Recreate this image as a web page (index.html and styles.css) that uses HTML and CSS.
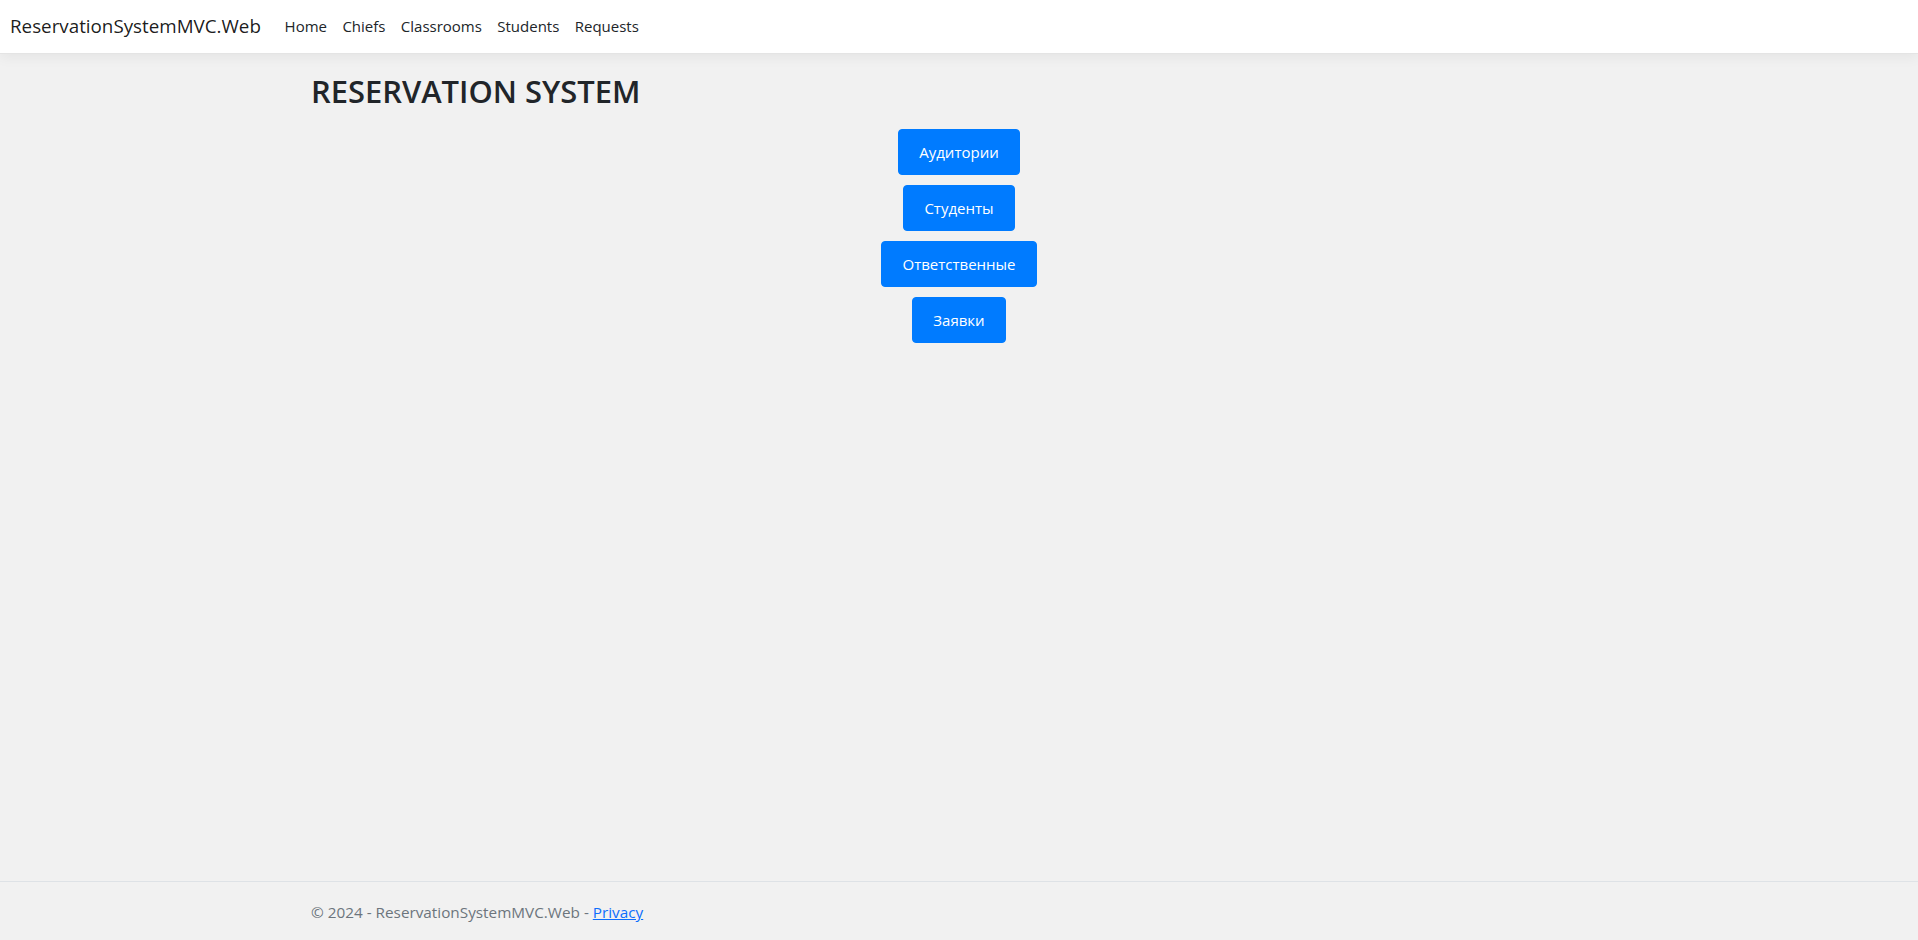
FILE: index.html
```html
<!DOCTYPE html>
<html lang="ru">
<head>
<meta charset="utf-8">
<title>ReservationSystemMVC.Web</title>
<link rel="stylesheet" href="styles.css">
</head>
<body>
<header class="navbar">
  <a class="brand" href="#">ReservationSystemMVC.Web</a>
  <nav class="nav">
    <a class="nav-link" href="#">Home</a>
    <a class="nav-link" href="#">Chiefs</a>
    <a class="nav-link" href="#">Classrooms</a>
    <a class="nav-link" href="#">Students</a>
    <a class="nav-link" href="#">Requests</a>
  </nav>
</header>
<main class="container">
  <h1 class="title">RESERVATION SYSTEM</h1>
  <div class="actions">
    <a class="btn" href="#">Аудитории</a>
    <a class="btn" href="#">Студенты</a>
    <a class="btn" href="#">Ответственные</a>
    <a class="btn" href="#">Заявки</a>
  </div>
</main>
<footer class="footer">
  <div class="container footer-inner">© 2024 - ReservationSystemMVC.Web - <a class="footer-link" href="#">Privacy</a></div>
</footer>
</body>
</html>
```
FILE: styles.css
```css
* { box-sizing: border-box; }
html, body { height: 100%; }
body {
  margin: 0;
  font-family: "Open Sans", "Noto Sans", "DejaVu Sans", sans-serif;
  font-size: 15px;
  line-height: 1.5;
  color: #212529;
  background: #f1f1f1;
  display: flex;
  flex-direction: column;
  overflow: hidden;
}
.navbar {
  height: 54px;
  background: #fff;
  border-bottom: 1px solid #e4e4e4;
  box-shadow: 0 4px 12px rgba(0, 0, 0, 0.05);
  display: flex;
  align-items: center;
  padding: 0 12px 2px 10px;
  flex-shrink: 0;
}
.brand {
  font-size: 18.8px;
  color: rgba(0, 0, 0, 0.9);
  text-decoration: none;
  margin-right: 16px;
  line-height: 30px;
}
.nav { display: flex; }
.nav-link {
  color: #212529;
  text-decoration: none;
  padding: 0 7.7px;
  font-size: 15px;
  line-height: 24px;
}
.container {
  width: 100%;
  max-width: 1320px;
  margin: 0 auto;
  padding: 0 12px;
}
main.container {
  flex: 1;
  padding-top: 19px;
}
.title {
  margin: 0 0 19px;
  font-size: 30.9px;
  font-weight: 600;
  line-height: 1.2;
  color: #212529;
}
.actions {
  display: flex;
  flex-direction: column;
  align-items: center;
  gap: 10px;
}
.btn {
  display: inline-block;
  padding: 10px 20px;
  line-height: 24px;
  font-size: 15px;
  color: #fff;
  background: #007bff;
  border: 1px solid #007bff;
  border-radius: 4px;
  text-decoration: none;
}
.footer {
  flex-shrink: 0;
  margin-bottom: -2px;
  border-top: 1px solid #dee2e6;
  line-height: 60px;
  white-space: nowrap;
  color: #6c757d;
  font-size: 15.3px;
}
.footer-link { color: #0d6efd; }
```
